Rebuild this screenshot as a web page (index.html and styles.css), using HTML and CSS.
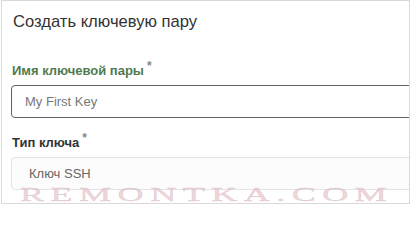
FILE: index.html
```html
<!DOCTYPE html>
<html lang="ru">
<head>
<meta charset="utf-8">
<link rel="stylesheet" href="styles.css">
</head>
<body>
<div class="frame">
  <div class="header">Создать ключевую пару</div>
  <div class="body">
    <div class="field">
      <label class="label label-active">Имя ключевой пары<span class="req">*</span></label>
      <div class="input input-focus">My First Key</div>
    </div>
    <div class="field">
      <label class="label">Тип ключа<span class="req">*</span></label>
      <div class="input input-disabled">Ключ SSH</div>
    </div>
  </div>
</div>
<div class="watermark">REMONTKA.COM</div>
</body>
</html>
```
FILE: styles.css
```css
html, body {
  margin: 0;
  padding: 0;
  background: #ffffff;
}
body {
  position: relative;
  width: 410px;
  height: 205px;
  overflow: hidden;
  font-family: "Liberation Sans", Arial, sans-serif;
}
.frame {
  margin-left: 1px;
  width: 409px;
  height: 204px;
  border: 1px solid #d9d9d9;
  overflow: hidden;
  box-sizing: border-box;
}
.header {
  padding: 11px 0 0 11px;
  height: 61px;
  box-sizing: border-box;
  font-size: 16.6px;
  line-height: 20px;
  color: #333;
}
.body {
  padding-left: 9px;
  display: flex;
  flex-direction: column;
  gap: 16px;
}
.field {
  display: flex;
  flex-direction: column;
  gap: 5px;
}
.label {
  font-size: 13px;
  font-weight: bold;
  color: #333;
  padding-left: 1px;
  line-height: 18px;
}
.label-active {
  color: #4f7a4f;
}
.req {
  color: #7c8a94;
  font-weight: bold;
  font-size: 12px;
  position: relative;
  top: -5px;
  margin-left: 3px;
}
.input {
  height: 33px;
  box-sizing: border-box;
  margin-right: -10px;
  border-radius: 4px;
  padding-left: 13px;
  display: flex;
  align-items: center;
  font-size: 13px;
  color: #777;
}
.input-focus {
  border: 1px solid #5f6264;
  background: #fff;
}
.input-disabled {
  border: 1px solid #e3e3e3;
  background: #fcfcfc;
  padding-left: 17px;
  color: #666;
}
.watermark {
  position: absolute;
  left: 20px;
  top: 185px;
  font-family: "Liberation Serif", "Times New Roman", serif;
  font-size: 19px;
  line-height: 20px;
  letter-spacing: 3.4px;
  transform: scaleX(1.9);
  transform-origin: left top;
  color: rgba(232, 196, 202, 0.7);
  -webkit-text-stroke: 0.3px rgba(200, 170, 175, 0.5);
  white-space: nowrap;
}
```
